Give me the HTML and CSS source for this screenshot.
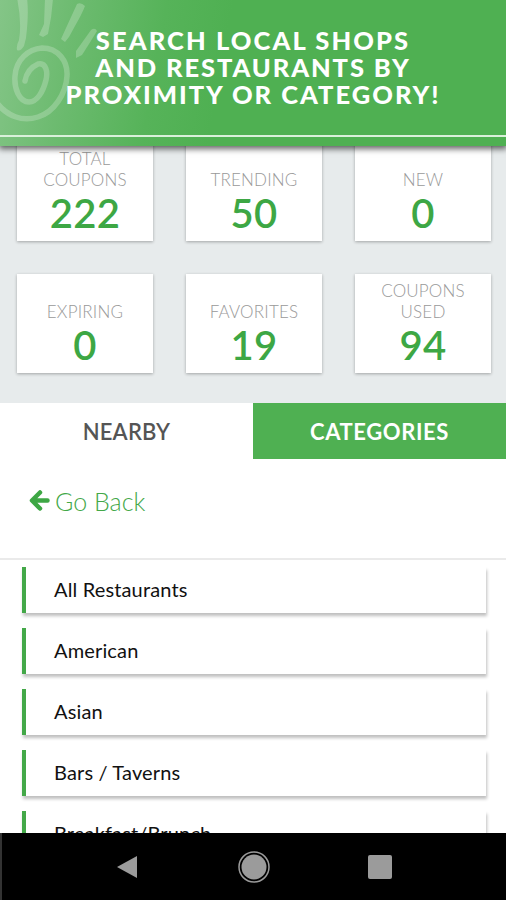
FILE: index.html
```html
<!DOCTYPE html>
<html lang="en">
<head>
<meta charset="utf-8">
<title>Search local shops and restaurants</title>
<link rel="stylesheet" href="styles.css">
</head>
<body>
<div class="banner">
	<svg class="hand" width="110" height="130" viewBox="0 0 110 130">
		<path class="finger" d="M17 -2 L27 -2 Q29 14 26 38 L24 46 Q20 52 17 50 Q16 46 19 40 Q22 22 17 -2Z"/>
		<path class="finger" d="M45 -2 L53 -2 Q52 16 48 34 L43 37 L39 35 L44 24Z"/>
		<path class="finger" d="M77 4 Q81 2 85 6 Q82 14 75 26 L69 37 L65 42 L61 39 L66 28Z"/>
		<path class="finger" d="M91 30 Q95 27 97 31 L89 44 L82 55 L76 58 L76 51Z"/>
		<path class="palm" d="M25 81 Q27 69 38 64 C46 62 48 72 46 80 C43 92 37 102 29 102 C19 102 14 88 15 76 C16 60 28 49 42 48 C58 48 68 61 67 76 C66 94 54 112 38 117 C22 122 7 116 -3 103"/>
	</svg>
	<h1 class="title">
		<span class="line1">SEARCH LOCAL SHOPS</span>
		<span class="line2">AND RESTAURANTS BY</span>
		<span class="line3">PROXIMITY OR CATEGORY!</span>
	</h1>
</div>
<div class="stats">
	<div class="card"><p>TOTAL<br>COUPONS</p><b>222</b></div>
	<div class="card"><p>TRENDING</p><b>50</b></div>
	<div class="card"><p>NEW</p><b>0</b></div>
	<div class="card"><p>EXPIRING</p><b>0</b></div>
	<div class="card"><p>FAVORITES</p><b>19</b></div>
	<div class="card"><p>COUPONS<br>USED</p><b>94</b></div>
</div>
<div class="tabs">
	<div class="tab">NEARBY</div>
	<div class="tab current">CATEGORIES</div>
</div>
<div class="back">
	<svg width="21" height="22" viewBox="0 0 21 22"><path d="M18.5 10.5H4M11 2.5L3 10.5L11 18.5"/></svg>
	<span>Go Back</span>
</div>
<ul class="list">
	<li>All Restaurants</li>
	<li>American</li>
	<li>Asian</li>
	<li>Bars / Taverns</li>
	<li>Breakfast/Brunch</li>
</ul>
<div class="navbar">
	<svg width="24" height="26" viewBox="0 0 24 26"><path d="M22 2V24L2 13Z"/></svg>
	<svg width="34" height="34" viewBox="0 0 34 34"><circle cx="17" cy="17" r="12.5"/><circle class="ring" cx="17" cy="17" r="15"/></svg>
	<svg width="24" height="24" viewBox="0 0 24 24"><rect width="24" height="24" rx="2"/></svg>
</div>
</body>
</html>
```
FILE: styles.css
```css
*{box-sizing:border-box;}
body,h1,p,ul{margin:0;padding:0;}
ul{list-style:none;}
body{display:flex;flex-direction:column;height:900px;overflow:hidden;background:#fff;font-family:Lato,"Open Sans",sans-serif;}

.banner{position:relative;z-index:2;flex:none;height:146px;padding-top:27px;background:linear-gradient(100deg,#84c587 0,#6dbb70 75px,#56b359 165px,#4fb052 230px);box-shadow:0 2px 6px 1px rgba(0,0,0,.6);}
.banner:after{content:"";position:absolute;left:0;right:0;bottom:9px;height:2px;background:#d9f0da;}
.hand{position:absolute;left:0;top:0;}
.finger{fill:#fff;opacity:.22;}
.palm{fill:none;stroke:#fff;stroke-width:5.5;stroke-linecap:round;opacity:.22;}
.title{position:relative;font-size:25.5px;font-weight:900;line-height:27px;color:#fff;text-align:center;}
.title span{display:block;white-space:nowrap;}
.line1{letter-spacing:2.1px;}
.line2{letter-spacing:1.9px;}
.line3{letter-spacing:2px;}

.stats{flex:none;display:grid;grid-template-columns:repeat(3,136px);grid-auto-rows:99px;gap:33px;height:261px;margin-top:-4px;padding:0 15px 0 17px;background:#e7ebec;}
.card{display:flex;flex-direction:column;justify-content:flex-end;padding-bottom:4px;background:#fff;box-shadow:0 1px 3px rgba(0,0,0,.3);text-align:center;}
.card p{font-size:17px;font-weight:300;line-height:21px;letter-spacing:.2px;color:#999;}
.card b{font-size:40px;font-weight:600;line-height:47px;letter-spacing:.3px;color:#3da744;}

.tabs{flex:none;display:flex;height:56px;}
.tab{flex:1;padding-top:1px;font-size:22px;font-weight:600;line-height:56px;text-align:center;letter-spacing:.2px;color:#555;}
.tab.current{background:#4fb052;color:#fff;font-weight:700;letter-spacing:.6px;}

.back{flex:none;display:flex;align-items:center;gap:5px;height:101px;padding:0 0 15px 29px;border-bottom:2px solid #eaeaea;font-size:25px;font-weight:300;color:#43a848;}
.back svg{margin-top:-1px;fill:none;stroke:#3da744;stroke-width:4.5;stroke-linecap:round;stroke-linejoin:round;}

.list{flex:1;min-height:0;overflow:hidden;padding:7px 20px 0 22px;}
.list li{height:46px;margin-bottom:15px;padding-left:28px;border-left:4px solid #43a848;box-shadow:1px 3px 3px rgba(0,0,0,.25);font-size:20px;line-height:44px;letter-spacing:.15px;color:#111;}

.navbar{flex:none;display:flex;align-items:center;justify-content:space-between;height:67px;padding:0 114px 0 113px;border-left:2px solid #333;background:#000;}
.navbar svg{fill:#9b9b9b;}
.navbar .ring{fill:none;stroke:#9b9b9b;stroke-width:1.5;}
```
